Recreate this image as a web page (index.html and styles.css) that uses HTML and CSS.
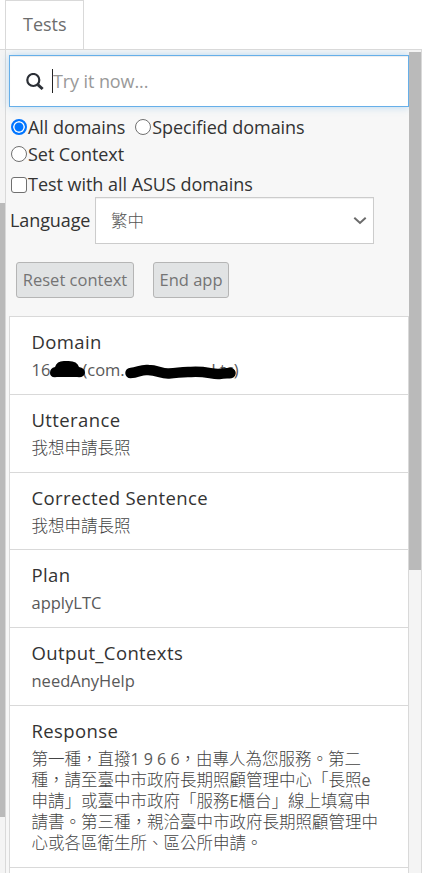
FILE: index.html
```
<!DOCTYPE html>
<html lang="zh-Hant">
<head>
<meta charset="utf-8">
<title>Tests</title>
<link rel="stylesheet" href="styles.css">
</head>
<body>
<div class="tabs"><div class="tab">Tests</div></div>
<div class="workspace">
  <div class="gutter"><div class="gutter-thumb"></div></div>
  <main class="panel">
    <div class="search">
      <svg class="search-icon" width="18" height="18" viewBox="0 0 18 18" fill="none" stroke="#2b2f36"><circle cx="7.3" cy="7" r="6" stroke-width="2.2"/><path d="M11.8 11.7L16.6 16" stroke-width="3"/></svg>
      <span class="caret"></span><span class="placeholder">Try it now...</span>
    </div>
    <div class="options">
      <label class="option"><span class="radio checked"></span><span>All domains</span></label>
      <label class="option"><span class="radio"></span><span>Specified domains</span></label>
    </div>
    <div class="options second"><label class="option"><span class="radio"></span><span>Set Context</span></label></div>
    <label class="option check-row"><span class="checkbox"></span><span>Test with all ASUS domains</span></label>
    <div class="language">
      <span>Language</span>
      <div class="select"><span>繁中</span><svg width="14" height="10" viewBox="0 0 14 10" fill="none" stroke="#6b6b6b" stroke-width="2"><path d="M1.3 1.7L7 7L12.7 1.7"/></svg></div>
    </div>
    <div class="actions"><button class="reset">Reset context</button><button class="end">End app</button></div>
    <div class="results">
      <section class="row"><h3>Domain</h3><p class="latin domain-value">16<span class="gap"></span>(com.<span class="hidden-name">Ltc</span>)
        <svg class="redaction" width="210" height="22" viewBox="0 0 210 22"><path d="M18 14Q18 9 23 8Q25 1 34 2Q45 1 47 8Q53 9 53 14Q52 19 45 18H25Q18 19 18 14Z"/><path d="M98.500 14C106 14 109 10 116 11C126 11 129 15 137 14.500C147 14 149 12.500 159 13C174 12 180 15.500 187 15C193 14 196 14.500 198.500 14" fill="none" stroke="#000" stroke-width="10.500" stroke-linecap="round"/></svg></p></section>
      <section class="row"><h3>Utterance</h3><p>我想申請長照</p></section>
      <section class="row"><h3>Corrected Sentence</h3><p>我想申請長照</p></section>
      <section class="row"><h3>Plan</h3><p class="latin">applyLTC</p></section>
      <section class="row"><h3>Output_Contexts</h3><p class="latin">needAnyHelp</p></section>
      <section class="row response"><h3>Response</h3><p>第一種，直撥<span class="digits">1 9 6 6</span>，由專人為您服務。第二<br>種，請至臺中市政府長期照顧管理中心「長照<span class="digits">e</span><br>申請」或臺中市政府「服務<span class="digits">E</span>櫃台」線上填寫申<br>請書。第三種，親洽臺中市政府長期照顧管理中<br>心或各區衛生所、區公所申請。</p></section>
      <section class="row"></section>
    </div>
  </main>
  <div class="scrollbar"><div class="scroll-thumb"></div></div>
</div>
</body>
</html>
```
FILE: styles.css
```
* { box-sizing: border-box; }
body { margin: 0; width: 422px; height: 873px; overflow: hidden; background: #fff; color: #333; font: 18px/24px "Open Sans", "Noto Sans CJK TC", sans-serif; }
.tabs { height: 50px; padding-left: 5px; border-bottom: 1px solid #d9d9d9; }
.tab { width: 79px; height: 49px; border: 1px solid #d9d9d9; border-bottom: 0; padding: 11px 0 0 17px; color: #6d6d6d; }
.workspace { display: flex; height: 823px; background: #f7f7f7; overflow: hidden; }
.gutter { width: 5px; padding-top: 153px; background: #f4f4f4; }
.gutter-thumb { height: 614px; background: #bababa; }
.panel { width: 404px; padding: 5px 0 0 3px; border-left: 1px solid #d9d9d9; }
.search { display: flex; align-items: center; width: 400px; height: 52px; padding-left: 16px; background: #fff; border: 1px solid #66afe9; box-shadow: inset 0 1px 1px #00000013, 0 0 8px #66afe970; color: #999; }
.search-icon { margin-top: 2px; }
.caret { width: 1px; height: 24px; margin-left: 8px; background: #222; }
.placeholder { letter-spacing: -.1px; }
.options { display: flex; height: 35px; padding: 8px 0 0 2px; gap: 10px; letter-spacing: -.05px; }
.options.second { padding-top: 0; height: 30px; }
.option { display: flex; align-items: center; height: 24px; white-space: nowrap; }
.radio { width: 16px; height: 16px; margin-right: 1px; border: 1px solid #707070; border-radius: 50%; background: #fff; }
.checked { border: 2px solid #0075ff; background: #0075ff; box-shadow: inset 0 0 0 1.5px #fff; }
.checkbox { width: 16px; height: 16px; margin: 2px 1px 0 0; border: 1px solid #707070; border-radius: 3px; background: #fff; }
.check-row { padding: 0 0 2px 2px; height: 25px; letter-spacing: -.03px; }
.language { display: flex; height: 47px; padding-left: 1px; }
.language > span { width: 85px; padding-top: 11px; letter-spacing: -.1px; }
.select { display: flex; align-items: center; justify-content: space-between; width: 279px; height: 47px; padding: 0 6px 0 15px; background: #fff; border: 1px solid #ccc; box-shadow: inset 0 1px 1px #00000010; color: #555; font-size: 16.5px; font-weight: 300; }
.actions { display: flex; gap: 19px; padding: 18px 0 0 7px; height: 72px; }
button { height: 36px; padding: 0; border: 1px solid #b5b5b5; border-radius: 3px; background: #e1e3e4; color: #747474; font: 16.5px/24px "Open Sans", sans-serif; }
.reset { width: 118px; }
.end { width: 76px; }
.results { width: 400px; background: #fff; border: 1px solid #d9d9d9; }
.row { height: 77.8px; padding: 13px 0 0 21.5px; border-bottom: 1px solid #d9d9d9; }
.response { height: 162px; }
h3 { height: 27px; margin: 0; font-size: 18.5px; font-weight: 400; line-height: 24px; letter-spacing: .38px; }
p { margin: 0; padding-top: 2px; color: #444; font-size: 16.5px; font-weight: 300; line-height: 21px; white-space: nowrap; }
.digits { font-weight: 400; font-size: 16px; line-height: 0; color: #595959; }
.latin { padding-top: 0; font-weight: 400; color: #595959; line-height: 26px; height: 26px; }
.domain-value { display: flex; position: relative; }
.gap { width: 32px; }
.hidden-name { width: 109px; text-align: right; }
.redaction { position: absolute; left: 0; top: 2px; }
.scrollbar { width: 13px; padding-top: 2px; border-right: 1px solid #d9d9d9; background: #f4f4f4; }
.scroll-thumb { height: 518px; background: #bababa; }
```
